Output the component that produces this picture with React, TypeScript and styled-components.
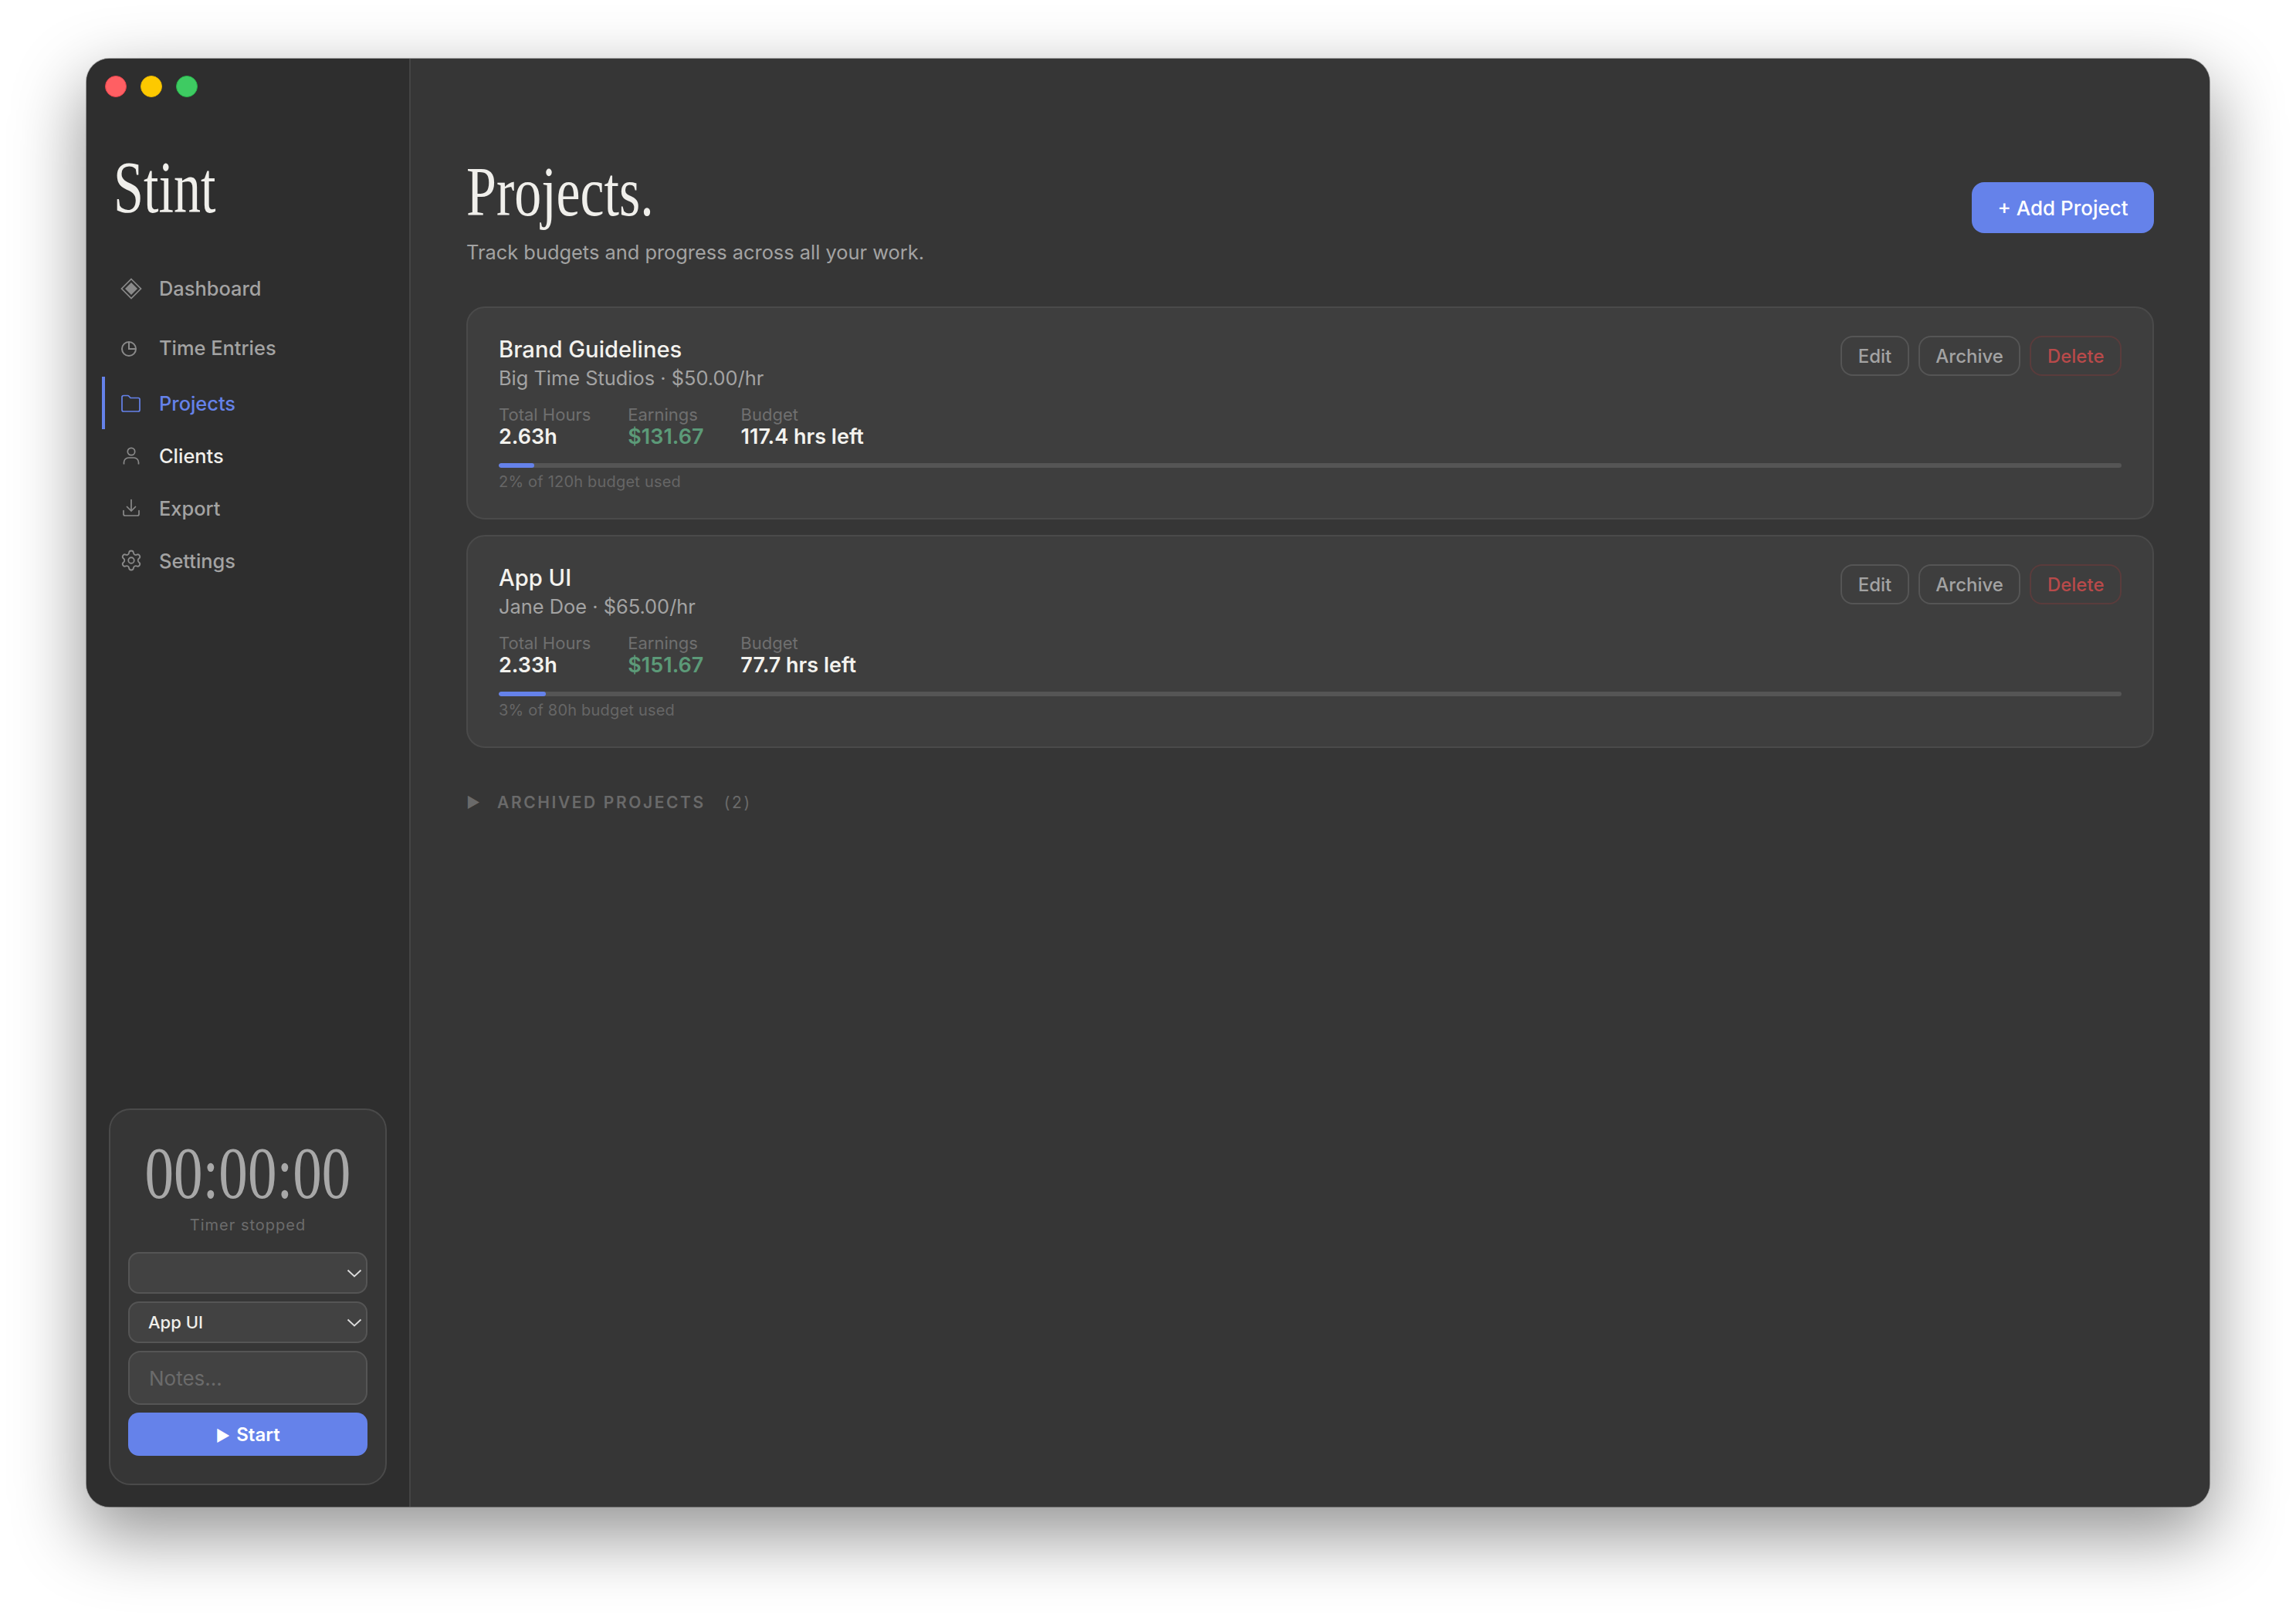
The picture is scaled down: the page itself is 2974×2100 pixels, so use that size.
import styled, { createGlobalStyle } from "styled-components";
import { Settings as GearIcon } from "lucide-react";

const GlobalStyle = createGlobalStyle`
  html, body {
    margin: 0;
    padding: 0;
    background: #ffffff;
  }
  * {
    box-sizing: border-box;
  }
`;

const SANS = `Inter, "Liberation Sans", sans-serif`;
const SERIF = `"Liberation Serif", serif`;
const ACCENT = "#6582ea";

const Page = styled.div`
  width: 2974px;
  height: 2100px;
  padding: 76px 112px 148px;
  font-family: ${SANS};
  overflow: hidden;
`;

const Window = styled.div`
  display: flex;
  width: 2750px;
  height: 1876px;
  border-radius: 30px;
  overflow: hidden;
  background: #363636;
  box-shadow: 0 0 0 1px rgba(0, 0, 0, 0.3), 0 34px 90px 4px rgba(0, 0, 0, 0.42);
`;

const Sidebar = styled.aside`
  display: flex;
  flex-direction: column;
  flex-shrink: 0;
  width: 420px;
  background: #2e2e2e;
  border-right: 2px solid #444444;
`;

const TrafficLights = styled.div`
  display: flex;
  gap: 18px;
  padding: 22px 0 0 24px;
`;

const Light = styled.span<{ $fill: string; $edge: string }>`
  width: 28px;
  height: 28px;
  border-radius: 50%;
  background: ${(p) => p.$fill};
  border: 1px solid ${(p) => p.$edge};
`;

const Logo = styled.div`
  margin: 67px 0 0 35px;
  font-family: ${SERIF};
  font-size: 96px;
  line-height: 100px;
  color: #f0efeb;
  transform: scaleX(0.73);
  transform-origin: left center;
`;

const Nav = styled.nav`
  display: flex;
  flex-direction: column;
  margin: 41px 0 0 20px;
`;

const NavItem = styled.div<{ $active?: boolean; $height: number; $color: string }>`
  display: flex;
  align-items: center;
  gap: 21px;
  height: ${(p) => p.$height}px;
  padding-left: 18px;
  border-left: 4px solid ${(p) => (p.$active ? ACCENT : "transparent")};
  font-size: 25.4px;
  font-weight: 500;
  color: ${(p) => p.$color};
`;

const NavIcon = styled.span<{ $color: string }>`
  display: flex;
  align-items: center;
  justify-content: center;
  flex-shrink: 0;
  width: 31px;
  height: 31px;
  color: ${(p) => p.$color};
`;

const TimerCard = styled.section`
  display: flex;
  flex-direction: column;
  align-items: center;
  width: 360px;
  height: 488px;
  margin: auto 0 28px 29px;
  padding: 34px 24px 0;
  background: #363636;
  border: 2px solid #4a4a4a;
  border-radius: 28px;
`;

const TimerDigits = styled.div`
  font-family: ${SERIF};
  font-size: 95px;
  line-height: 96px;
  color: #a8a8a8;
  white-space: nowrap;
  transform: scaleX(0.79);
`;

const TimerStatus = styled.div`
  margin-top: 5px;
  font-size: 20px;
  line-height: 28px;
  letter-spacing: 1px;
  color: #6c6c6c;
`;

const TimerForm = styled.div`
  display: flex;
  flex-direction: column;
  gap: 10px;
  width: 310px;
  margin-top: 21px;
`;

const SelectWrap = styled.div`
  position: relative;
  height: 54px;
`;

const Select = styled.select`
  appearance: none;
  width: 100%;
  height: 100%;
  padding: 0 0 0 24px;
  background: #424242;
  border: 2px solid #555555;
  border-radius: 14px;
  font-family: ${SANS};
  font-size: 22px;
  font-weight: 500;
  color: #f0efeb;
`;

const Chevron = styled.svg`
  position: absolute;
  right: 7px;
  top: 22px;
  width: 20px;
  height: 11px;
  pointer-events: none;
`;

const NotesInput = styled.input`
  height: 70px;
  padding: 0 25px;
  background: #424242;
  border: 2px solid #555555;
  border-radius: 16px;
  font-family: ${SANS};
  font-size: 26px;
  color: #f0efeb;

  &::placeholder {
    color: #6b6b6b;
    opacity: 1;
  }
`;

const StartButton = styled.button`
  height: 56px;
  border: 0;
  border-radius: 14px;
  background: ${ACCENT};
  font-family: ${SANS};
  font-size: 24px;
  font-weight: 600;
  color: #ffffff;
`;

const PlayGlyph = styled.span`
  font-size: 20px;
  margin-right: 2px;
`;

const Main = styled.main`
  flex: 1;
  display: flex;
  flex-direction: column;
  padding: 0 72px;
  background: #363636;
`;

const Header = styled.header`
  display: flex;
  justify-content: space-between;
  align-items: flex-start;
  height: 321px;
  padding-top: 126px;
`;

const Title = styled.h1`
  margin: 0;
  font-family: ${SERIF};
  font-size: 92px;
  font-weight: 400;
  line-height: 92px;
  color: #f0efeb;
  transform: scaleX(0.76);
  transform-origin: left center;
`;

const Subtitle = styled.p`
  margin: 16px 0 0;
  font-size: 25.4px;
  line-height: 34px;
  color: #a3a3a3;
`;

const AddButton = styled.button`
  width: 236px;
  height: 66px;
  margin-top: 34px;
  border: 0;
  border-radius: 16px;
  background: ${ACCENT};
  font-family: ${SANS};
  font-size: 26px;
  font-weight: 500;
  color: #ffffff;
`;

const CardList = styled.div`
  display: flex;
  flex-direction: column;
  gap: 20px;
`;

const Card = styled.article`
  height: 276px;
  padding: 36px 40px 0;
  background: #3e3e3e;
  border: 2px solid #4a4a4a;
  border-radius: 24px;
`;

const CardTop = styled.div`
  display: flex;
  justify-content: space-between;
  align-items: flex-start;
`;

const CardName = styled.h2`
  margin: 0;
  font-size: 29.2px;
  font-weight: 550;
  line-height: 36px;
  color: #f3f2ee;
`;

const CardClient = styled.div`
  margin-top: 1px;
  font-size: 25.4px;
  line-height: 36px;
  color: #a3a3a3;
`;

const Stats = styled.div`
  display: flex;
  gap: 48px;
  margin-top: 16px;
`;

const StatLabel = styled.div`
  font-size: 22px;
  line-height: 26px;
  color: #6f6f6f;
`;

const StatValue = styled.div<{ $green?: boolean }>`
  font-size: 27px;
  font-weight: 600;
  line-height: 32px;
  color: ${(p) => (p.$green ? "#5c9a78" : "#f3f2ee")};
`;

const Actions = styled.div`
  display: flex;
  gap: 12px;
`;

const ActionButton = styled.button<{ $danger?: boolean }>`
  height: 52px;
  padding: 0 20.5px;
  background: transparent;
  border: 2px solid ${(p) => (p.$danger ? "#5a3c3c" : "#555555")};
  border-radius: 16px;
  font-family: ${SANS};
  font-size: 24px;
  font-weight: 500;
  color: ${(p) => (p.$danger ? "#b84a4a" : "#a3a3a3")};
`;

const Track = styled.div`
  height: 6px;
  margin-top: 18px;
  border-radius: 3px;
  background: #555555;
  overflow: hidden;
`;

const Fill = styled.div`
  height: 100%;
  border-radius: 3px;
  background: ${ACCENT};
`;

const BudgetNote = styled.div`
  margin-top: 4px;
  font-size: 20px;
  line-height: 28px;
  letter-spacing: 0.2px;
  color: #666666;
`;

const ArchivedRow = styled.div`
  display: flex;
  align-items: center;
  margin-top: 55px;
  height: 30px;
  font-size: 21px;
  font-weight: 600;
  letter-spacing: 2.6px;
  color: #6a6a6a;
`;

const ArchivedArrow = styled.span`
  width: 40px;
  font-size: 19px;
  letter-spacing: 0;
`;

const ArchivedCount = styled.span`
  margin-left: 24px;
  font-weight: 400;
`;

const ICON = "#8a8a8a";

const DiamondGlyph = () => (
  <svg width="28" height="28" viewBox="0 0 28 28">
    <polygon points="14,1.5 26.5,14 14,26.5 1.5,14" fill="none" stroke="currentColor" strokeWidth="1.7" />
    <polygon points="14,6 22,14 14,22 6,14" fill="currentColor" />
  </svg>
);

const ClockGlyph = () => (
  <svg width="22" height="22" viewBox="0 0 22 22" fill="none" stroke="currentColor" strokeWidth="2" style={{ transform: "translate(-3px, 1px)" }}>
    <circle cx="11" cy="11" r="9" />
    <path d="M11 2V11H20" />
  </svg>
);

const FolderGlyph = () => (
  <svg width="25" height="23" viewBox="0 0 25 23" fill="none" stroke="currentColor" strokeWidth="1.7" strokeLinejoin="round">
    <path d="M1 3.5a2 2 0 0 1 2-2h5.5a2 2 0 0 1 1.5.7L12 4.5h10a2 2 0 0 1 2 2V20a2 2 0 0 1-2 2H3a2 2 0 0 1-2-2Z" />
  </svg>
);

const UserGlyph = () => (
  <svg width="22" height="23" viewBox="0 0 22 23" fill="none" stroke="currentColor" strokeWidth="1.7">
    <circle cx="11" cy="6" r="4.7" />
    <path d="M1.5 22.5v-2.5a6 6 0 0 1 6-6h7a6 6 0 0 1 6 6v2.5" />
  </svg>
);

const ExportGlyph = () => (
  <svg width="24" height="24" viewBox="0 0 24 24" fill="none" stroke="currentColor" strokeWidth="1.7" strokeLinecap="round" strokeLinejoin="round">
    <path d="M2 15.5V20a2 2 0 0 0 2 2h16a2 2 0 0 0 2-2v-4.5" />
    <path d="M12 1.5V15.5" />
    <path d="M6.5 10.5l5.5 5.5 5.5-5.5" />
  </svg>
);

const NAV = [
  { label: "Dashboard", height: 79, color: "#a3a3a3", icon: <DiamondGlyph /> },
  { label: "Time Entries", height: 75, color: "#a3a3a3", icon: <ClockGlyph /> },
  { label: "Projects", height: 68, color: ACCENT, active: true, icon: <FolderGlyph /> },
  { label: "Clients", height: 68, color: "#f0efeb", icon: <UserGlyph /> },
  { label: "Export", height: 68, color: "#a3a3a3", icon: <ExportGlyph /> },
  { label: "Settings", height: 68, color: "#a3a3a3", icon: <GearIcon size={30} strokeWidth={1.45} /> },
];

const PROJECTS = [
  {
    name: "Brand Guidelines",
    client: "Big Time Studios · $50.00/hr",
    hours: "2.63h",
    earnings: "$131.67",
    budget: "117.4 hrs left",
    progress: 2.2,
    note: "2% of 120h budget used",
  },
  {
    name: "App UI",
    client: "Jane Doe · $65.00/hr",
    hours: "2.33h",
    earnings: "$151.67",
    budget: "77.7 hrs left",
    progress: 2.9,
    note: "3% of 80h budget used",
  },
];

function ChevronDown() {
  return (
    <Chevron viewBox="0 0 20 11" fill="none" stroke="#dddddd" strokeWidth="1.8">
      <path d="M1.5 1.5L10 9.5L18.5 1.5" />
    </Chevron>
  );
}

export default function App() {
  return (
    <Page>
      <GlobalStyle />
      <Window>
        <Sidebar>
          <TrafficLights>
            <Light $fill="#ff5f63" $edge="#e2434b" />
            <Light $fill="#fdc900" $edge="#e5b400" />
            <Light $fill="#3ecb62" $edge="#28b14a" />
          </TrafficLights>
          <Logo>Stint</Logo>
          <Nav>
            {NAV.map((item) => (
              <NavItem key={item.label} $active={item.active} $height={item.height} $color={item.color}>
                <NavIcon $color={item.active ? ACCENT : ICON}>{item.icon}</NavIcon>
                {item.label}
              </NavItem>
            ))}
          </Nav>
          <TimerCard>
            <TimerDigits>00:00:00</TimerDigits>
            <TimerStatus>Timer stopped</TimerStatus>
            <TimerForm>
              <SelectWrap>
                <Select aria-label="Client">
                  <option></option>
                </Select>
                <ChevronDown />
              </SelectWrap>
              <SelectWrap>
                <Select aria-label="Project" defaultValue="App UI">
                  <option>App UI</option>
                  <option>Brand Guidelines</option>
                </Select>
                <ChevronDown />
              </SelectWrap>
              <NotesInput placeholder="Notes..." />
              <StartButton>
                <PlayGlyph>▶</PlayGlyph> Start
              </StartButton>
            </TimerForm>
          </TimerCard>
        </Sidebar>
        <Main>
          <Header>
            <div>
              <Title>Projects.</Title>
              <Subtitle>Track budgets and progress across all your work.</Subtitle>
            </div>
            <AddButton>+ Add Project</AddButton>
          </Header>
          <CardList>
            {PROJECTS.map((project) => (
              <Card key={project.name}>
                <CardTop>
                  <div>
                    <CardName>{project.name}</CardName>
                    <CardClient>{project.client}</CardClient>
                    <Stats>
                      <div>
                        <StatLabel>Total Hours</StatLabel>
                        <StatValue>{project.hours}</StatValue>
                      </div>
                      <div>
                        <StatLabel>Earnings</StatLabel>
                        <StatValue $green>{project.earnings}</StatValue>
                      </div>
                      <div>
                        <StatLabel>Budget</StatLabel>
                        <StatValue>{project.budget}</StatValue>
                      </div>
                    </Stats>
                  </div>
                  <Actions>
                    <ActionButton>Edit</ActionButton>
                    <ActionButton>Archive</ActionButton>
                    <ActionButton $danger>Delete</ActionButton>
                  </Actions>
                </CardTop>
                <Track>
                  <Fill style={{ width: `${project.progress}%` }} />
                </Track>
                <BudgetNote>{project.note}</BudgetNote>
              </Card>
            ))}
          </CardList>
          <ArchivedRow>
            <ArchivedArrow>▶</ArchivedArrow>
            ARCHIVED PROJECTS
            <ArchivedCount>(2)</ArchivedCount>
          </ArchivedRow>
        </Main>
      </Window>
    </Page>
  );
}
